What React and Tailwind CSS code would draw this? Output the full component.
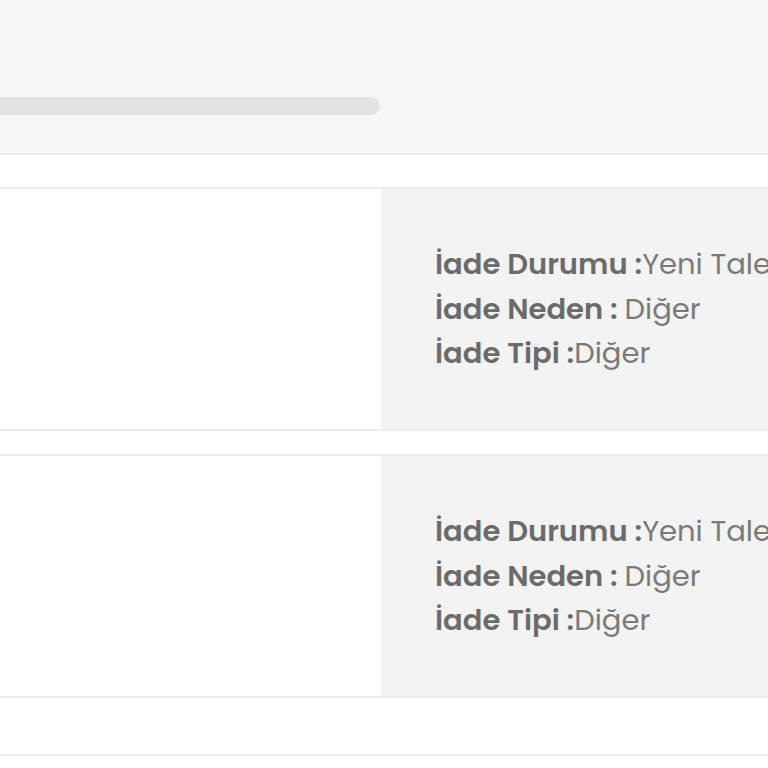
import React from 'react';

const returns = [
  { status: 'Yeni Talep', reason: 'Diğer', type: 'Diğer' },
  { status: 'Yeni Talep', reason: 'Diğer', type: 'Diğer' },
];

const ReturnRow = ({ item }) => (
  <div className="flex h-[244px] border-y-2 border-[#ececec]">
    {/* product column (empty in this view) */}
    <div className="w-[381px] shrink-0 bg-white" />
    <div className="flex min-w-0 flex-1 items-center overflow-hidden bg-[#f3f3f3] pl-[54px]">
      <div className="whitespace-nowrap text-[29px] leading-[44.5px] text-[#7a7a7a]">
        <p>
          <span className="font-semibold text-[#6b6b6b]">İade Durumu :</span>
          {item.status}
        </p>
        <p>
          <span className="font-semibold text-[#6b6b6b]">İade Neden : </span>
          {item.reason}
        </p>
        <p>
          <span className="font-semibold text-[#6b6b6b]">İade Tipi :</span>
          {item.type}
        </p>
      </div>
    </div>
  </div>
);

export default function App() {
  return (
    <div
      className="h-[768px] w-[768px] overflow-hidden bg-white"
      style={{ fontFamily: '"Poppins", "Inter", "Noto Sans", sans-serif' }}
    >
      {/* header */}
      <div className="h-[155px] border-b-2 border-[#ececec] bg-[#f7f7f7] pt-[97px]">
        <div className="h-[18px] w-[380px] rounded-r-full bg-[#e3e3e3]" />
      </div>

      <div className="mt-[32px] flex flex-col gap-[23px]">
        {returns.map((item, idx) => (
          <ReturnRow key={idx} item={item} />
        ))}
      </div>

      <div className="mt-[56px] border-t-2 border-[#ececec]" />
    </div>
  );
}
